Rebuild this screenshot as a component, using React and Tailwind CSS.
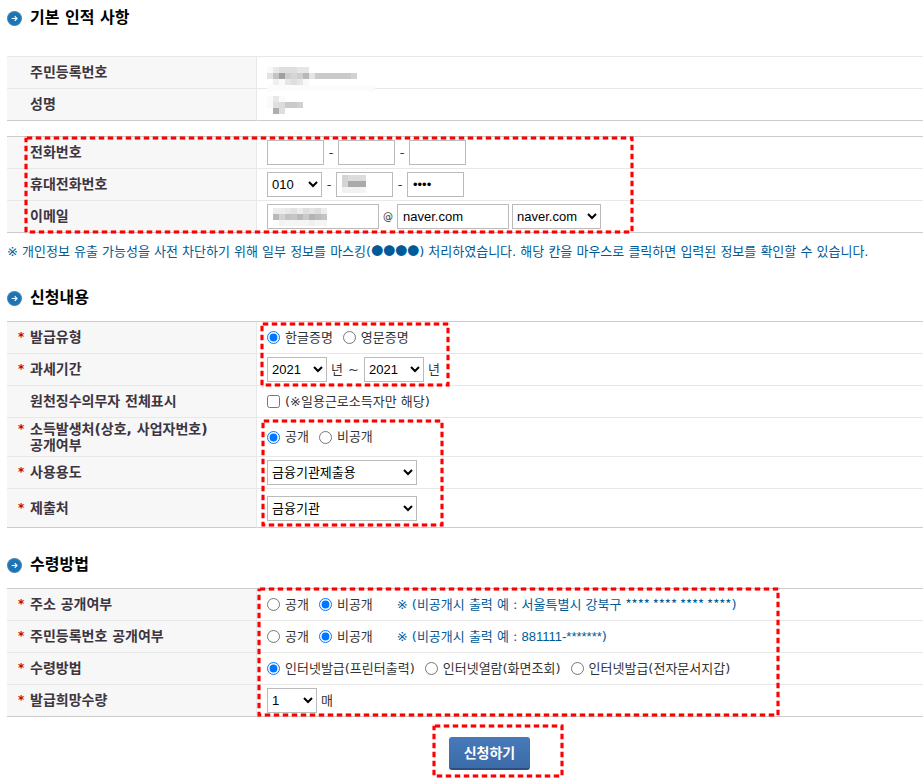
import React, { useState } from 'react';

const MOSAICS = {
  resident: {
    cell: 6,
    rows: [
      ['#f9f9f9', '#e8e8e8', '#dedede', '#dedede', '#dedede', '#e6e6e6', '#e6e6e6'],
      ['#e2e2e2', '#c4c4c4', '#a0a0a0', '#cecece', '#d6d6d6', '#cecece', '#b8b8b8', '#e4e4e4', '#cacaca', '#cacaca', '#cacaca', '#cacaca', '#cacaca', '#cacaca', '#d2d2d2'],
      [null, '#efefef', '#fafafa', '#e6e6e6', '#dedede', '#e6e6e6', '#f9f9f9'],
      Array(18).fill('#fbfbfb'),
    ],
  },
  name: {
    cell: 6,
    rows: [
      ['#fafafa', '#e8e8e8', '#fafafa'],
      ['#fafafa', '#e0e0e0', '#dcdcdc', '#cacaca', '#cacaca', '#d0d0d0'],
      [null, '#aeaeae', '#dedede'],
    ],
  },
  phone: {
    cell: 6,
    rows: [
      ['#d4d4d4', '#dcdcdc', '#dcdcdc', '#dcdcdc'],
      ['#d4d4d4', '#aaaaaa', '#aaaaaa', '#aaaaaa'],
      ['#f2f2f2', '#f2f2f2', '#f2f2f2', '#f5f5f5'],
    ],
  },
  email: {
    cell: 6,
    rows: [
      ['#ececec', '#ececec', '#e8e8e8', '#e2e2e2', '#ececec', '#dedede', '#e4e4e4', '#dedede', '#ececec'],
      ['#b8b8b8', '#d2d2d2', '#c2c2c2', '#c6c6c6', '#b8b8b8', '#cacaca', '#b4b4b4', '#bcbcbc', '#c4c4c4'],
      ['#fcfcfc', '#f2f2f2', '#f5f5f5', '#f5f5f5', '#f5f5f5', '#f5f5f5', '#f0f0f0', '#f5f5f5', '#f5f5f5'],
    ],
  },
};

const Mosaic = ({ name, className = '' }) => {
  const { cell, rows } = MOSAICS[name];
  const width = Math.max(...rows.map((r) => r.length)) * cell;
  return (
    <svg width={width} height={rows.length * cell} shapeRendering="crispEdges" className={className} aria-hidden="true">
      {rows.map((row, y) =>
        row.map((fill, x) =>
          fill ? <rect key={`${x}-${y}`} x={x * cell} y={y * cell} width={cell} height={cell} fill={fill} /> : null
        )
      )}
    </svg>
  );
};

// Red dashed frame laid over the fields that have to be filled in
const Highlight = ({ className }) => (
  <svg className={`absolute overflow-visible pointer-events-none ${className}`} aria-hidden="true">
    <rect width="100%" height="100%" fill="none" stroke="#ff0000" strokeOpacity="0.25" strokeWidth="3" strokeDasharray="7 2" />
    <rect width="100%" height="100%" fill="none" stroke="#ff0000" strokeWidth="3" strokeDasharray="5 4" strokeDashoffset="-1" />
  </svg>
);

const Heading = ({ children }) => (
  <h2 className="flex items-center gap-2 h-6 text-base font-bold text-black">
    <svg width="15" height="15" viewBox="0 0 16 16" aria-hidden="true">
      <circle cx="8" cy="8" r="8" fill="#3f82b4" />
      <circle cx="8" cy="8" r="6.8" fill="#1a74b5" />
      <path d="M5 8h5.5M8.2 5.6 10.7 8 8.2 10.4" fill="none" stroke="#fff" strokeWidth="1.2" />
    </svg>
    {children}
  </h2>
);

const FormTable = ({ children, light }) => (
  <table className={`w-full border-separate border-spacing-0 border-t ${light ? 'border-[#e8e8e8]' : 'border-[#cccccc]'}`}>
    <tbody className="[&>tr:last-child>*]:border-b-[#cccccc]">{children}</tbody>
  </table>
);

const Row = ({ label, required, height = 'h-8', children }) => (
  <tr className={height}>
    <th scope="row" className="w-[250px] p-0 pb-px bg-[#f7f7f7] border-b border-r border-[#e8e8e8] text-left text-sm leading-4 font-bold text-[#3d3540]">
      <div className="flex">
        <span className="w-[23px] pl-[11px] text-xs leading-4 text-[#cc0000]">{required ? '*' : ''}</span>
        <span className="whitespace-pre-line">{label}</span>
      </div>
    </th>
    <td className="p-0 pl-[10px] border-b border-[#e8e8e8]">
      <div className="flex items-center">{children}</div>
    </td>
  </tr>
);

const TextBox = ({ className = 'w-[57px]', ...props }) => (
  <input
    className={`h-[25px] px-[5px] border border-[#bbbbbb] bg-white text-black font-['Liberation_Sans','Noto_Sans_CJK_KR',sans-serif] ${className}`}
    {...props}
  />
);

const Select = ({ options, className, ...props }) => (
  <select
    className={`h-[25px] border border-[#bbbbbb] bg-white text-black font-['Liberation_Sans','Noto_Sans_CJK_KR',sans-serif] ${className}`}
    {...props}
  >
    {options.map((option) => (
      <option key={option}>{option}</option>
    ))}
  </select>
);

const RadioGroup = ({ name, options, initial }) => {
  const [value, setValue] = useState(initial);
  return (
    <div className="flex gap-[10px]">
      {options.map((option) => (
        <label key={option} className="flex items-center gap-[5px]">
          <input type="radio" name={name} className="size-[13px]" checked={value === option} onChange={() => setValue(option)} />
          {option}
        </label>
      ))}
    </div>
  );
};

const Dash = () => <span className="w-[14px] text-center">-</span>;

const years = ['2021', '2020', '2019', '2018', '2017'];

const App = () => {
  return (
    <main className="pl-[7px] pt-[6px] bg-white text-[13px] leading-4 text-[#333333] font-['DejaVu_Sans','Noto_Sans_CJK_KR',sans-serif]">
      <section>
        <Heading>기본 인적 사항</Heading>
        <div className="mt-[26px]">
          <FormTable light>
            <Row label="주민등록번호">
              <div className="relative">
                <Mosaic name="resident" className="absolute left-0 top-[-6px]" />
              </div>
            </Row>
            <Row label="성명">
              <Mosaic name="name" />
            </Row>
          </FormTable>
        </div>
        <div className="relative mt-[15px]">
          <FormTable>
            <Row label="전화번호">
              <TextBox aria-label="전화번호 앞자리" />
              <Dash />
              <TextBox aria-label="전화번호 가운데자리" />
              <Dash />
              <TextBox aria-label="전화번호 뒷자리" />
            </Row>
            <Row label="휴대전화번호">
              <Select className="w-[55px]" options={['010', '011', '016', '017', '019']} aria-label="휴대전화 앞자리" />
              <Dash />
              <div className="relative flex">
                <TextBox aria-label="휴대전화 가운데자리" />
                <Mosaic name="phone" className="absolute left-[6px] top-[3px]" />
              </div>
              <Dash />
              <TextBox type="password" defaultValue="1234" aria-label="휴대전화 뒷자리" />
            </Row>
            <Row label="이메일">
              <div className="relative flex">
                <TextBox className="w-[112px]" aria-label="이메일 아이디" />
                <Mosaic name="email" className="absolute left-[6px] top-[4px]" />
              </div>
              <span className="w-[18px] text-center text-[10px]">@</span>
              <TextBox className="w-[112px]" defaultValue="naver.com" aria-label="이메일 도메인" />
              <Select className="w-[89px] ml-[3px]" options={['naver.com', 'daum.net', 'gmail.com']} aria-label="이메일 도메인 선택" />
            </Row>
          </FormTable>
          <Highlight className="left-[19px] top-[2px] w-[606px] h-[94px]" />
        </div>
        <p className="mt-[10px] text-[#005a96]">
          ※ 개인정보 유출 가능성을 사전 차단하기 위해 일부 정보를 마스킹(
          <span className="text-xs leading-4 font-['Noto_Sans_CJK_KR',sans-serif]">●●●●</span>
          ) 처리하였습니다. 해당 칸을 마우스로 클릭하면 입력된 정보를 확인할 수 있습니다.
        </p>
      </section>

      <section className="mt-[26px]">
        <Heading>신청내용</Heading>
        <div className="relative mt-[11px]">
          <FormTable>
            <Row label="발급유형" required>
              <RadioGroup name="type" options={['한글증명', '영문증명']} initial="한글증명" />
            </Row>
            <Row label="과세기간" required>
              <Select className="w-[60px]" options={years} aria-label="시작 연도" />
              <span className="ml-1">년</span>
              <span className="w-[21px] text-center">~</span>
              <Select className="w-[60px]" options={years} aria-label="종료 연도" />
              <span className="ml-1">년</span>
            </Row>
            <Row label="원천징수의무자 전체표시">
              <label className="flex items-center gap-[5px]">
                <input type="checkbox" className="size-[13px]" />
                (※일용근로소득자만 해당)
              </label>
            </Row>
            <Row label={'소득발생처(상호, 사업자번호)\n공개여부'} required height="h-[39px]">
              <RadioGroup name="income" options={['공개', '비공개']} initial="공개" />
            </Row>
            <Row label="사용용도" required>
              <Select className="w-[150px]" options={['금융기관제출용', '관공서제출용', '기타']} aria-label="사용용도" />
            </Row>
            <Row label="제출처" required height="h-[39px]">
              <Select className="w-[150px]" options={['금융기관', '관공서', '기타']} aria-label="제출처" />
            </Row>
          </FormTable>
          <Highlight className="left-[255px] top-[3px] w-[186px] h-[61px]" />
          <Highlight className="left-[256px] top-[100px] w-[179px] h-[104px]" />
        </div>
      </section>

      <section className="mt-[25px]">
        <Heading>수령방법</Heading>
        <div className="relative mt-[11px]">
          <FormTable>
            <Row label="주소 공개여부" required>
              <RadioGroup name="address" options={['공개', '비공개']} initial="비공개" />
              <span className="ml-6 text-[#005a96]">
                ※ (비공개시 출력 예 : 서울특별시 강북구{' '}
                <span className="font-['Noto_Sans_CJK_KR',sans-serif]">**** **** **** ****</span>)
              </span>
            </Row>
            <Row label="주민등록번호 공개여부" required>
              <RadioGroup name="resident" options={['공개', '비공개']} initial="비공개" />
              <span className="ml-6 text-[#005a96]">
                ※ (비공개시 출력 예 : <span className="font-['Liberation_Sans',sans-serif]">881111-*******</span>)
              </span>
            </Row>
            <Row label="수령방법" required>
              <RadioGroup
                name="method"
                options={['인터넷발급(프린터출력)', '인터넷열람(화면조회)', '인터넷발급(전자문서지갑)']}
                initial="인터넷발급(프린터출력)"
              />
            </Row>
            <Row label="발급희망수량" required>
              <Select className="w-[50px]" options={['1', '2', '3', '4', '5']} aria-label="발급희망수량" />
              <span className="ml-1">매</span>
            </Row>
          </FormTable>
          <Highlight className="left-[252px] top-[1px] w-[519px] h-[126px]" />
        </div>
      </section>

      <div className="flex justify-center mt-5 pb-3 pl-[49px]">
        <div className="relative">
          <button
            type="button"
            className="block h-[33px] px-[15px] rounded-[3px] border-b-2 border-[#2c4f7c] bg-linear-to-b from-[#477ab9] to-[#3b6ba8] text-sm font-bold text-white"
          >
            신청하기
          </button>
          <Highlight className="left-[-15px] top-[-11px] w-[128px] h-[50px]" />
        </div>
      </div>
    </main>
  );
};

export default App;
